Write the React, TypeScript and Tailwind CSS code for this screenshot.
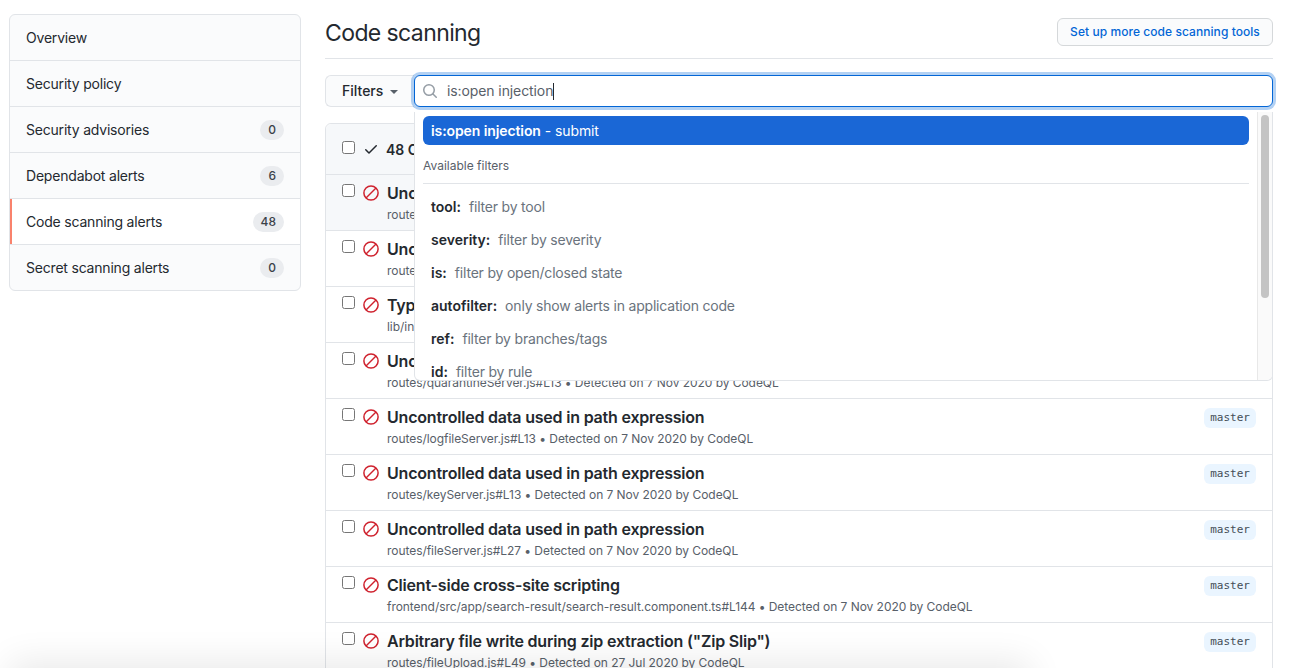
import React from "react";

const sideItems = [
  { label: "Overview" },
  { label: "Security policy" },
  { label: "Security advisories", count: 0 },
  { label: "Dependabot alerts", count: 6 },
  { label: "Code scanning alerts", count: 48, active: true },
  { label: "Secret scanning alerts", count: 0 },
];

const alerts = [
  { title: "Uncontrolled data used in path expression", meta: "routes/videoHandler.js#L57 • Detected on 7 Nov 2020 by CodeQL", hover: true },
  { title: "Uncontrolled data used in path expression", meta: "routes/dataExport.js#L61 • Detected on 7 Nov 2020 by CodeQL" },
  { title: "Type confusion through parameter tampering", meta: "lib/insecurity.js#L13 • Detected on 7 Nov 2020 by CodeQL" },
  { title: "Uncontrolled data used in path expression", meta: "routes/quarantineServer.js#L13 • Detected on 7 Nov 2020 by CodeQL" },
  { title: "Uncontrolled data used in path expression", meta: "routes/logfileServer.js#L13 • Detected on 7 Nov 2020 by CodeQL" },
  { title: "Uncontrolled data used in path expression", meta: "routes/keyServer.js#L13 • Detected on 7 Nov 2020 by CodeQL" },
  { title: "Uncontrolled data used in path expression", meta: "routes/fileServer.js#L27 • Detected on 7 Nov 2020 by CodeQL" },
  { title: "Client-side cross-site scripting", meta: "frontend/src/app/search-result/search-result.component.ts#L144 • Detected on 7 Nov 2020 by CodeQL" },
  { title: 'Arbitrary file write during zip extraction ("Zip Slip")', meta: "routes/fileUpload.js#L49 • Detected on 27 Jul 2020 by CodeQL" },
];

const filters = [
  { key: "tool:", desc: "filter by tool" },
  { key: "severity:", desc: "filter by severity" },
  { key: "is:", desc: "filter by open/closed state" },
  { key: "autofilter:", desc: "only show alerts in application code" },
  { key: "ref:", desc: "filter by branches/tags" },
  { key: "id:", desc: "filter by rule" },
];

const Checkbox = () => (
  <span className="block w-[13px] h-[13px] rounded-[2.5px] border border-[#767676] bg-white shrink-0" />
);

const StopIcon = () => (
  <svg width="16" height="16" viewBox="0 0 16 16" fill="none" stroke="#cf222e" strokeWidth="1.5" className="shrink-0 mt-px">
    <circle cx="8" cy="8" r="7.1" />
    <path d="M3 13 13 3" />
  </svg>
);

const App = () => {
  return (
    <div className="relative h-[668px] w-[1297px] overflow-hidden bg-white text-[#24292f] font-['Inter',sans-serif]">
      <div className="flex items-start gap-6 pl-[9px] pt-[14px]">
        {/* Sidebar */}
        <nav className="w-[292px] shrink-0 rounded-md border border-[#e1e4e8] overflow-hidden bg-[#fafbfc]">
          {sideItems.map((item, i) => (
            <div
              key={item.label}
              className={`relative flex items-center justify-between pl-4 pr-4 text-sm tracking-[-0.2px] ${i > 0 ? "h-[46px] border-t border-[#e1e4e8]" : "h-[45px]"} ${item.active ? "bg-white" : ""}`}
            >
              {item.active && <span className="absolute left-0 top-0 bottom-0 w-0.5 bg-[#f9826c]" />}
              <span>{item.label}</span>
              {item.count !== undefined && (
                <span className="rounded-full bg-[#eaecef] px-2 h-5 min-w-[22px] flex items-center justify-center text-xs font-medium tracking-normal text-[#3b4249]">
                  {item.count}
                </span>
              )}
            </div>
          ))}
        </nav>

        {/* Main */}
        <main className="w-[948px] shrink-0">
          <div className="flex items-center justify-between h-[45px] border-b border-[#e1e4e8] pb-[7px]">
            <h1 className="text-[23px] tracking-[-0.6px] font-normal mt-0.5">Code scanning</h1>
            <button className="h-7 w-[216px] -mt-0.5 rounded-md border border-[#d5d8da] bg-[#fafbfc] text-xs font-medium tracking-[0.06px] text-[#0366d6]">
              Set up more code scanning tools
            </button>
          </div>

          <div className="relative mt-4 flex gap-0 h-8">
            <button className="flex items-center gap-[7px] w-[89px] pl-4 h-[32px] rounded-l-md border border-r-0 border-[#e1e4e8] bg-[#fafbfc] text-sm font-medium">
              Filters
              <span className="w-0 h-0 border-x-[4.5px] border-x-transparent border-t-4 border-t-[#586069] mt-0.5" />
            </button>
            <div className="flex-1 flex items-center rounded-md border border-[#0366d6] bg-white pl-[7px] shadow-[0_0_0_3px_rgba(3,102,214,0.3)]">
              <svg width="16" height="16" viewBox="0 0 16 16" fill="#959da5" className="shrink-0">
                <path d="M10.68 11.74a6 6 0 0 1-7.922-8.982 6 6 0 0 1 8.982 7.922l3.04 3.04a.749.749 0 0 1-.326 1.275.749.749 0 0 1-.734-.215ZM11.5 7a4.499 4.499 0 1 0-8.997 0A4.499 4.499 0 0 0 11.5 7Z" />
              </svg>
              <span className="ml-[9px] text-sm tracking-[-0.1px] text-[#586069]">is:open injection</span>
              <span className="w-px h-[17px] bg-[#24292f]" />
            </div>

            {/* Suggestions dropdown */}
            <div className="absolute z-10 left-[89px] top-[37px] w-[859px] h-[269px] flex rounded-b-md border border-t-0 border-[#e1e4e8] bg-white overflow-hidden">
              <div className="flex-1 pl-2 pr-2 pt-[4px] overflow-hidden">
                <div className="h-[29px] flex items-center rounded-md bg-[#1a67d6] px-2 text-sm tracking-[-0.1px] text-white">
                  <span className="font-semibold">is:open injection</span>
                  <span className="ml-1">- submit</span>
                </div>
                <div className="h-[39px] pt-[3px] flex items-center border-b border-[#e1e4e8] text-xs text-[#586069]">Available filters</div>
                <ul className="pt-[6px]">
                  {filters.map((f) => (
                    <li key={f.key} className="h-[33px] flex items-center pl-2 text-sm">
                      <span className="font-semibold mr-2">{f.key}</span>
                      <span className="text-[#6a737d] tracking-[-0.2px]">{f.desc}</span>
                    </li>
                  ))}
                </ul>
              </div>
              <div className="w-[15px] shrink-0 border-l border-[#e8e8e8] bg-[#fafafa] pt-[3px] pl-[3px]">
                <div className="w-2 h-[183px] rounded-full bg-[#c4c4c4]" />
              </div>
            </div>
          </div>

          {/* Alerts list */}
          <div className="mt-4 rounded-t-md border border-[#e1e4e8]">
            <div className="h-[50px] flex items-start gap-2 pl-4 pt-[17px] bg-[#f6f8fa] rounded-t-md">
              <Checkbox />
              <svg width="16" height="16" viewBox="0 0 16 16" fill="#24292f" className="shrink-0">
                <path d="M13.78 4.22a.75.75 0 0 1 0 1.06l-7.25 7.25a.75.75 0 0 1-1.06 0L2.22 9.28a.751.751 0 0 1 .018-1.042.751.751 0 0 1 1.042-.018L6 10.94l6.72-6.72a.75.75 0 0 1 1.06 0Z" />
              </svg>
              <span className="text-sm font-semibold -mt-px -ml-px">48 Open</span>
            </div>
            {alerts.map((a, i) => (
              <div
                key={i}
                className={`h-[56px] flex border-t border-[#e1e4e8] pl-4 pr-4 pt-[9px] ${a.hover ? "bg-[#f6f8fa]" : "bg-white"}`}
              >
                <div className="flex items-start gap-2 shrink-0">
                  <Checkbox />
                  <StopIcon />
                </div>
                <div className="ml-2 flex-1 min-w-0 -mt-px">
                  <div className="text-base font-semibold leading-[21px] tracking-[-0.2px]">{a.title}</div>
                  <div className="text-xs text-[#586069] mt-[3px] leading-[16px] tracking-[-0.05px]">{a.meta}</div>
                </div>
                <span className="h-5 px-[6px] flex items-center rounded-md bg-[#eaf5ff] font-['DejaVu_Sans_Mono',monospace] text-[11px] text-[#444d56]">
                  master
                </span>
              </div>
            ))}
          </div>
        </main>
      </div>

      {/* Fading shadow along the bottom edge */}
      <div className="absolute left-[20px] top-[672px] w-[1000px] h-10 shadow-[0_0_36px_10px_rgba(0,0,0,0.09)]" />
    </div>
  );
};

export default App;
